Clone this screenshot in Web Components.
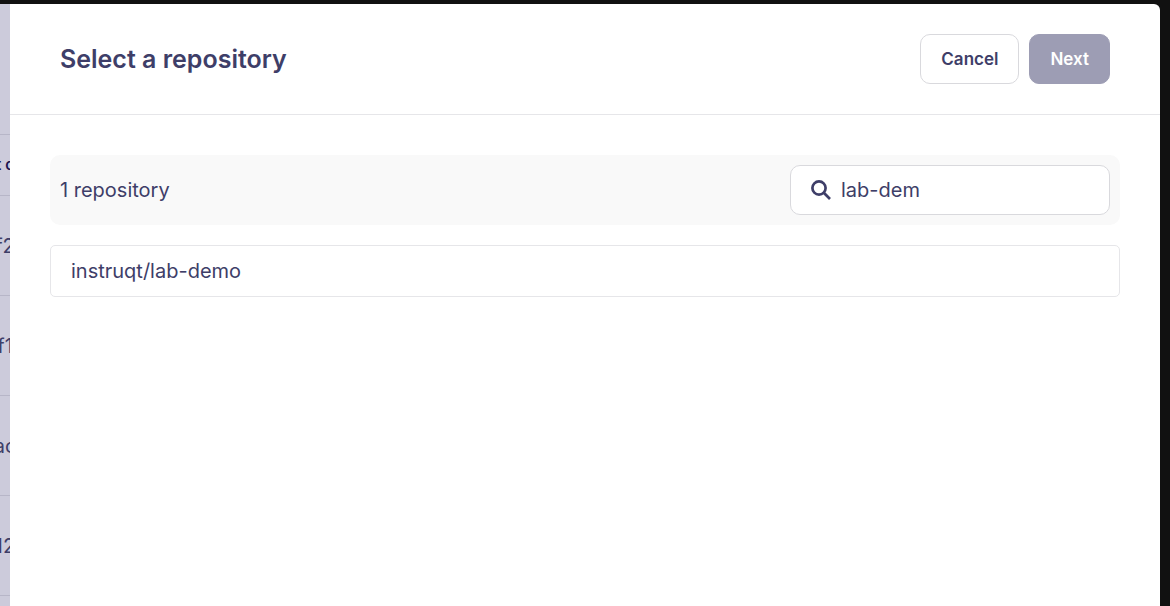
<!DOCTYPE html>
<html lang="en">
<head>
<meta charset="utf-8">
<title>Select a repository</title>
<style>
    html, body{
        margin: 0;
        height: 100%;
        background: #111;
    }

    body{
        --ink: #3e3e68;
        --line: #e6e6e9;
        font-family: Inter, "Liberation Sans", sans-serif;
        font-size: 20px;
        line-height: 30px;
        color: var(--ink);
        overflow: hidden;
    }
</style>
</head>
<body>

<modal-screen>
    <track-column slot="behind" label="t c" values="f2,f1,ac,12"></track-column>
    <modal-header>
        Select a repository
        <action-button slot="actions" label="Cancel"></action-button>
        <action-button slot="actions" label="Next" disabled></action-button>
    </modal-header>
    <repo-picker>
        <search-box slot="search" value="lab-dem"></search-box>
        <repo-item>instruqt/lab-demo</repo-item>
    </repo-picker>
</modal-screen>

<script>
(function(){

function make_template(html)
{
    const template = document.createElement('template');
    template.innerHTML = html;
    return template;
}

class BaseElement extends HTMLElement {
    constructor(template)
    {
        super();

        this.attachShadow({mode: 'open'}).appendChild(template.content.cloneNode(true));
    }
}

const screen_template = make_template(`
<style>
    :host{
        display: flex;
        box-sizing: border-box;
        min-height: 100vh;
        padding: 4px 10px 0 0;
    }

    .behind{
        flex: 0 0 10px;
        overflow: hidden;
        background: #cccbdb;
    }

    main{
        flex: 1;
        min-width: 0;
        background: #fff;
        border-top-right-radius: 6px;
    }
</style>

<div class="behind"><slot name="behind"></slot></div>
<main><slot></slot></main>
`);

customElements.define('modal-screen', class extends BaseElement {
    constructor(){ super(screen_template); }
});

// the table that the modal leaves uncovered
const column_template = make_template(`
<style>
    :host{
        display: block;
        height: 100%;
        padding-top: 130px;
        box-sizing: border-box;
    }

    table{
        width: 100%;
        table-layout: fixed;
        border-collapse: collapse;
    }

    th, td{
        height: 99px;
        padding: 0;
        border-top: 1px solid #b7b6c8;
    }

    th{
        height: 60px;
        font-size: 15px;
        font-weight: 600;
        color: #1b1550;
    }

    tr:last-child td{ border-bottom: 1px solid #b7b6c8; }

    span{
        display: flex;
        justify-content: center;
        white-space: nowrap;
    }
</style>

<table>
    <thead><tr><th><span></span></th></tr></thead>
    <tbody></tbody>
</table>
`);

customElements.define('track-column', class extends BaseElement {
    constructor(){ super(column_template); }

    connectedCallback()
    {
        this.shadowRoot.querySelector('th span').textContent = this.getAttribute('label');

        let body = this.shadowRoot.querySelector('tbody');
        body.replaceChildren();
        for (const value of this.getAttribute('values').split(',')) {
            let text = document.createElement('span');
            text.textContent = value;
            body.insertRow().insertCell().appendChild(text);
        }
    }
});

const header_template = make_template(`
<style>
    :host{
        display: flex;
        align-items: center;
        justify-content: space-between;
        gap: 20px;
        padding: 30px 50px;
        border-bottom: 1px solid var(--line);
    }

    h1{
        margin: 0;
        font-size: 25px;
        font-weight: 600;
        line-height: 30px;
    }

    div{
        display: flex;
        gap: 10px;
    }
</style>

<h1><slot></slot></h1>
<div><slot name="actions"></slot></div>
`);

customElements.define('modal-header', class extends BaseElement {
    constructor(){ super(header_template); }
});

const button_template = make_template(`
<style>
    :host{ display: block; }

    button{
        height: 50px;
        padding: 0 20px;
        border: 1px solid #d9d9dd;
        border-radius: 10px;
        background: #fff;
        font: inherit;
        font-size: 17px;
        font-weight: 600;
        color: inherit;
        cursor: pointer;
    }

    button:disabled{
        border-color: #9d9db4;
        background: #9d9db4;
        color: #fff;
        cursor: default;
    }
</style>

<button type="button"></button>
`);

customElements.define('action-button', class extends BaseElement {
    constructor(){ super(button_template); }

    connectedCallback()
    {
        let button = this.shadowRoot.querySelector('button');
        button.textContent = this.getAttribute('label');
        button.disabled = this.hasAttribute('disabled');
    }
});

const picker_template = make_template(`
<style>
    :host{
        display: flex;
        flex-direction: column;
        gap: 20px;
        padding: 40px;
    }

    .bar{
        display: flex;
        align-items: center;
        justify-content: space-between;
        padding: 10px;
        border-radius: 10px;
        background: #f9f9f9;
    }
</style>

<div class="bar">
    <span id="count"></span>
    <slot name="search"></slot>
</div>
<div class="list" role="list"><slot></slot></div>
`);

customElements.define('repo-picker', class extends BaseElement {
    constructor()
    {
        super(picker_template);

        this._count = this.shadowRoot.getElementById('count');
        this._slot = this.shadowRoot.querySelector('.list slot');
    }

    connectedCallback()
    {
        this._slot.addEventListener('slotchange', () => this.update());
        this.update();
    }

    update()
    {
        let total = this.querySelectorAll('repo-item').length;
        this._count.textContent = `${total} ${total === 1 ? 'repository' : 'repositories'}`;
    }
});

const search_template = make_template(`
<style>
    :host{
        display: block;
        flex: 0 1 320px;
        min-width: 0;
    }

    label{
        display: flex;
        align-items: center;
        gap: 10px;
        height: 50px;
        padding: 0 20px;
        box-sizing: border-box;
        border: 1px solid #d9d9dd;
        border-radius: 10px;
        background: #fff;
    }

    svg{
        flex: none;
        width: 20px;
        height: 20px;
    }

    input{
        flex: 1;
        min-width: 0;
        padding: 0;
        border: 0;
        outline: 0;
        background: none;
        font: inherit;
        color: inherit;
    }
</style>

<label>
    <svg viewBox="0 0 20 20" fill="none" stroke="currentColor" stroke-width="2.7" aria-hidden="true">
        <circle cx="8" cy="8" r="6.6"/>
        <path d="M12.8 12.8L19 19"/>
    </svg>
    <input type="text" aria-label="Search repositories">
</label>
`);

customElements.define('search-box', class extends BaseElement {
    constructor(){ super(search_template); }

    connectedCallback()
    {
        this.shadowRoot.querySelector('input').value = this.getAttribute('value') || '';
    }
});

const item_template = make_template(`
<style>
    :host{
        display: block;
        padding: 10px 20px;
        border: 1px solid var(--line);
        border-radius: 5px;
    }
</style>

<slot></slot>
`);

customElements.define('repo-item', class extends BaseElement {
    constructor(){ super(item_template); }

    connectedCallback(){ this.setAttribute('role', 'listitem'); }
});

})();
</script>
</body>
</html>
